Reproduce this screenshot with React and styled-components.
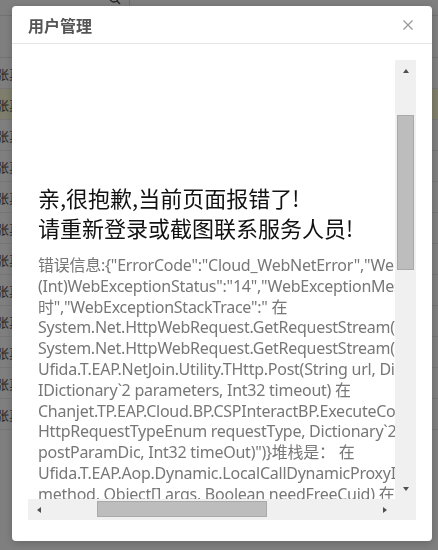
import React from "react";
import styled, { createGlobalStyle } from "styled-components";

const GlobalStyle = createGlobalStyle`
  html, body { margin: 0; padding: 0; overflow: hidden; }
  body { font-family: "Noto Sans", "Noto Sans CJK SC", sans-serif; background: #fff; }
  * { box-sizing: border-box; }
`;

const Page = styled.div`
  width: 438px;
  height: 550px;
  background: #fff;
  overflow: hidden;
`;

const Toolbar = styled.div`
  height: 16px;
  border-bottom: 1px solid #e6e6e6;
  display: flex;
  align-items: flex-end;
`;

const SearchBox = styled.div`
  width: 130px;
  height: 16px;
  border-right: 1px solid #dcdcdc;
  display: flex;
  justify-content: flex-end;
  align-items: flex-start;
  padding-right: 8px;
`;

const TableHead = styled.div`
  height: 42px;
  border-bottom: 1px solid #e6e6e6;
`;

const Row = styled.div`
  height: 31px;
  border-bottom: 1px solid #ececec;
  background: ${(p) => (p.$active ? "#fffbd6" : "#ffffff")};
  display: flex;
  align-items: center;
  font-family: "Noto Sans CJK SC", sans-serif;
  font-size: 13px;
  color: #555;
`;

const CellText = styled.span`
  margin-left: -4px;
`;

const Overlay = styled.div`
  position: fixed;
  inset: 0;
  background: rgba(0, 0, 0, 0.5);
`;

const Modal = styled.div`
  position: fixed;
  left: 12px;
  top: 6px;
  width: 420px;
  height: 535px;
  background: #fff;
  border-radius: 4px;
  box-shadow: 0 2px 8px rgba(0, 0, 0, 0.2);
  display: flex;
  flex-direction: column;
`;

const Header = styled.div`
  height: 38px;
  flex: none;
  border-bottom: 1px solid #e5e5e5;
  display: flex;
  align-items: center;
  justify-content: space-between;
  padding: 0 19px 0 16px;
`;

const Title = styled.div`
  font-family: "Noto Sans CJK SC", sans-serif;
  font-weight: 700;
  font-size: 16px;
  color: #555;
  line-height: 20px;
`;

const Close = styled.button`
  border: 0;
  background: none;
  padding: 0;
  width: 10px;
  height: 10px;
  display: flex;
  cursor: pointer;
`;

const Body = styled.div`
  padding: 16px 16px 0 16px;
`;

const Frame = styled.div`
  display: grid;
  grid-template-columns: 367px 21px;
  grid-template-rows: 439px 21px;
`;

const Viewport = styled.div`
  overflow: hidden;
  background: #fff;
  padding: 122px 0 0 10px;
`;

const Heading = styled.div`
  font-family: "Noto Sans CJK SC", sans-serif;
  font-size: 22px;
  line-height: 30px;
  color: #111;
  white-space: nowrap;
`;

const Detail = styled.div`
  margin-top: 13px;
  font-family: "Noto Sans", "Noto Sans CJK SC", sans-serif;
  font-size: 16px;
  line-height: 20.8px;
  letter-spacing: -0.25px;
  color: #777;
  white-space: nowrap;
`;

const VBar = styled.div`
  background: #f0f0f0;
  display: flex;
  flex-direction: column;
`;

const HBar = styled.div`
  background: #f0f0f0;
  display: flex;
`;

const Corner = styled.div`
  background: #f0f0f0;
`;

const ArrowButton = styled.div`
  width: 21px;
  height: 21px;
  flex: none;
  display: flex;
  align-items: center;
  justify-content: center;
  &::before {
    content: "";
    width: 0;
    height: 0;
    border-style: solid;
    border-color: transparent;
    ${(p) =>
      p.$dir === "up"
        ? "border-width: 0 3.5px 4px 3.5px; border-bottom-color: #505050;"
        : p.$dir === "down"
        ? "border-width: 4px 3.5px 0 3.5px; border-top-color: #505050;"
        : p.$dir === "left"
        ? "border-width: 3.5px 4px 3.5px 0; border-right-color: #505050;"
        : "border-width: 3.5px 0 3.5px 4px; border-left-color: #505050;"}
  }
`;

const VTrack = styled.div`
  flex: 1;
  padding: 34px 2px 0 2px;
`;

const HTrack = styled.div`
  flex: 1;
  padding: 2px 0 0 48px;
`;

const Thumb = styled.div`
  background: #bdbdbd;
  border: 1px solid #a9a9a9;
  width: ${(p) => p.$w};
  height: ${(p) => p.$h};
`;

const rows = Array.from({ length: 12 }, (_, i) => i);

const lines = [
  '错误信息:{"ErrorCode":"Cloud_WebNetError","WebExceptionStatus":"',
  '(Int)WebExceptionStatus":"14","WebExceptionMessage":"操作超',
  '时","WebExceptionStackTrace":" 在',
  "System.Net.HttpWebRequest.GetRequestStream(TransportContext& context) 在",
  "System.Net.HttpWebRequest.GetRequestStream() 在",
  "Ufida.T.EAP.NetJoin.Utility.THttp.Post(String url, Dictionary`2 headers,",
  "IDictionary`2 parameters, Int32 timeout) 在",
  "Chanjet.TP.EAP.Cloud.BP.CSPInteractBP.ExecuteCore(String url,",
  "HttpRequestTypeEnum requestType, Dictionary`2 headers, Dictionary`2",
  'postParamDic, Int32 timeOut)")}堆栈是： 在',
  "Ufida.T.EAP.Aop.Dynamic.LocalCallDynamicProxyInterceptor.Invoke(MethodInfo",
  "method, Object[] args, Boolean needFreeCuid) 在",
  "Ufida.T.EAP.Aop.Dynamic.DynamicProxy.Invoke(Object proxy) 在",
];

export default function App() {
  return (
    <Page>
      <GlobalStyle />
      <Toolbar>
        <SearchBox>
          <svg width="12" height="12" viewBox="0 0 12 12" style={{ marginTop: -6 }}>
            <circle cx="5" cy="5" r="4" fill="none" stroke="#444" strokeWidth="1.4" />
            <line x1="8" y1="8" x2="11" y2="11" stroke="#444" strokeWidth="1.4" />
          </svg>
        </SearchBox>
      </Toolbar>
      <TableHead />
      {rows.map((i) => (
        <Row key={i} $active={i === 1}>
          <CellText>张真</CellText>
        </Row>
      ))}
      <Overlay />
      <Modal>
        <Header>
          <Title>用户管理</Title>
          <Close aria-label="close">
            <svg width="10" height="10" viewBox="0 0 10 10">
              <path d="M0.5 0.5 L9.5 9.5 M9.5 0.5 L0.5 9.5" stroke="#999" strokeWidth="1.3" />
            </svg>
          </Close>
        </Header>
        <Body>
          <Frame>
            <Viewport>
              <Heading>
                亲,很抱歉,当前页面报错了!
                <br />
                请重新登录或截图联系服务人员!
              </Heading>
              <Detail>
                {lines.map((l, i) => (
                  <div key={i}>{l}</div>
                ))}
              </Detail>
            </Viewport>
            <VBar>
              <ArrowButton $dir="up" />
              <VTrack>
                <Thumb $w="17px" $h="155px" />
              </VTrack>
              <ArrowButton $dir="down" />
            </VBar>
            <HBar>
              <ArrowButton $dir="left" />
              <HTrack>
                <Thumb $w="170px" $h="16px" />
              </HTrack>
              <ArrowButton $dir="right" />
            </HBar>
            <Corner />
          </Frame>
        </Body>
      </Modal>
    </Page>
  );
}
